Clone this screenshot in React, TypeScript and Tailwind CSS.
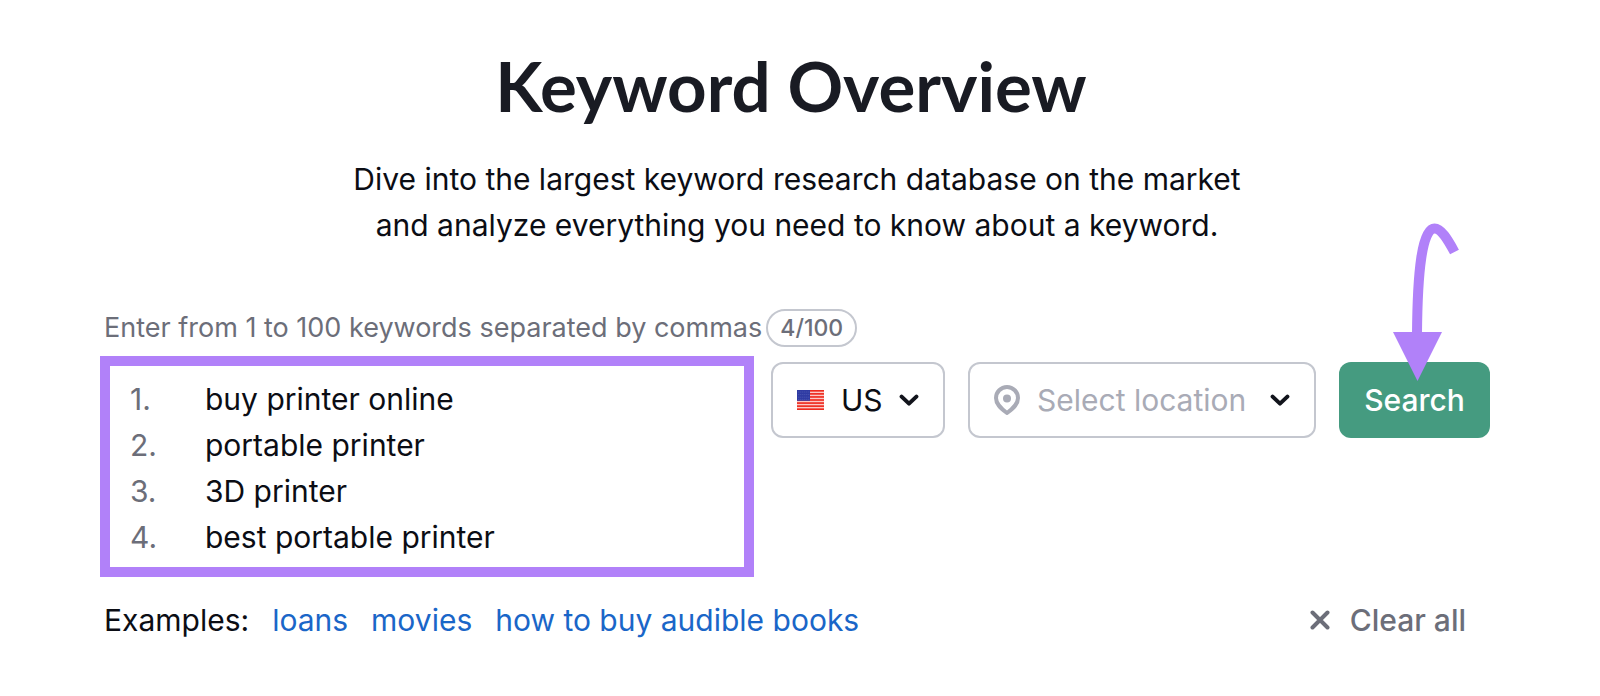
import { useState } from "react";

const PURPLE = "#b181f9";

const examples = ["loans", "movies", "how to buy audible books"];

function Chevron() {
  return (
    <svg
      viewBox="0 0 20 12"
      className="pointer-events-none h-3 w-5 shrink-0"
      fill="none"
      stroke="#12141c"
      strokeWidth="4"
      strokeLinecap="round"
      strokeLinejoin="round"
      aria-hidden="true"
    >
      <path d="M2.6 2.6 10 9.600l7.400-7" />
    </svg>
  );
}

function Flag() {
  return (
    <svg viewBox="0 0 27 20" className="h-5 w-[27px] shrink-0" aria-hidden="true">
      <rect width="27" height="20" fill="#fbc9c6" />
      {[0, 1, 2, 3, 4, 5, 6].map((i) => (
        <rect key={i} y={i * 3.06} width="27" height="1.65" fill="#ee2a1e" />
      ))}
      <rect width="13" height="10.8" fill="#2f3ba3" />
      {[2, 4.6, 7.2, 9.4].map((y) => (
        <path key={y} d={`M1.5 ${y}h11`} stroke="#6f78c4" strokeWidth=".7" strokeDasharray=".7 1.3" />
      ))}
    </svg>
  );
}

function Pin() {
  return (
    <svg viewBox="0 0 26 30" className="h-[30px] w-[26px] shrink-0" aria-hidden="true">
      <path
        d="M13 2C6.9 2 2 6.9 2 13c0 5.800 4 9.700 11 15 7-5.300 11-9.200 11-15C24 6.900 19.100 2 13 2Z"
        fill="none"
        stroke="#a9abb6"
        strokeWidth="4"
        strokeLinejoin="round"
      />
      <circle cx="13" cy="13.500" r="4" fill="#a9abb6" />
    </svg>
  );
}

function Arrow() {
  return (
    <svg
      viewBox="0 0 70 160"
      className="pointer-events-none absolute -top-[140px] left-[54px] h-40 w-[70px]"
      aria-hidden="true"
    >
      <path
        d="M61.500 30C54.500 17 48 6.500 41.500 6.500C29 6.500 24.500 50 24 112"
        fill="none"
        stroke={PURPLE}
        strokeWidth="10"
      />
      <path d="M0 110h49L24.500 159Z" fill={PURPLE} />
    </svg>
  );
}

export default function App() {
  const [text, setText] = useState("buy printer online\nportable printer\n3D printer\nbest portable printer");
  const lines = text.split("\n");
  const count = lines.filter((line) => line.trim()).length;

  return (
    <main className="min-h-screen bg-white pt-11 pr-[110px] pb-10 pl-[104px] font-['Inter',sans-serif] text-[30px] text-[#0b0d14] [font-optical-sizing:none]">
      <header className="text-center">
        <h1 className="pr-3 font-['Lato',sans-serif] text-[69px] leading-[84px] font-bold text-[#191b23]">
          Keyword Overview
        </h1>
        <p className="mt-7 leading-[46px]">
          Dive into the largest keyword research database on the market
          <br />
          and analyze everything you need to know about a keyword.
        </p>
      </header>

      <form onSubmit={(e) => e.preventDefault()}>
        <div className="mt-[61px] flex items-center gap-1">
          <label htmlFor="keywords" className="text-[27px] leading-[38px] text-[#6c6e79]">
            Enter from 1 to 100 keywords separated by commas
          </label>
          <span className="rounded-full border-2 border-[#c4c7cf] px-3 text-[23px] leading-[34px] font-medium text-[#6c6e79]">
            {count}/100
          </span>
        </div>

        <div className="mt-[9px] flex items-start gap-[23px]">
          <div className="-mr-[6px] -ml-1 flex min-w-0 flex-1 border-[10px] border-[#b181f9] px-5 pt-[10px] pb-[7px] leading-[46px]">
            <ol className="w-[75px] shrink-0 text-[#6c6e79]" aria-hidden="true">
              {lines.map((_, i) => (
                <li key={i}>{i + 1}.</li>
              ))}
            </ol>
            <textarea
              id="keywords"
              rows={lines.length}
              value={text}
              onChange={(e) => setText(e.target.value)}
              className="block min-w-0 flex-1 resize-none overflow-hidden bg-transparent outline-none"
            />
          </div>

          <div className="mt-[6px] flex h-[76px] w-[174px] items-center rounded-xl border-2 border-[#c4c7cf] px-6">
            <Flag />
            <select aria-label="Country" className="ml-[17px] min-w-0 flex-1 appearance-none bg-transparent outline-none">
              <option>US</option>
            </select>
            <Chevron />
          </div>

          <div className="mt-[6px] flex h-[76px] w-[348px] items-center rounded-xl border-2 border-[#c4c7cf] px-6">
            <Pin />
            <select
              aria-label="Location"
              className="ml-[17px] min-w-0 flex-1 appearance-none bg-transparent text-[#a9abb6] outline-none"
            >
              <option>Select location</option>
            </select>
            <Chevron />
          </div>

          <div className="relative mt-[6px]">
            <button type="submit" className="h-[76px] w-[151px] rounded-xl bg-[#459b80] font-medium text-white">
              Search
            </button>
            <Arrow />
          </div>
        </div>

        <div className="mt-5 flex items-center justify-between pr-6 leading-[46px]">
          <div className="flex gap-[23px]">
            <span>Examples:</span>
            {examples.map((item) => (
              <a key={item} href="#" className="text-[#1a66c8]">
                {item}
              </a>
            ))}
          </div>
          <button type="button" onClick={() => setText("")} className="flex items-center gap-5 font-medium text-[#6c6e79]">
            <svg viewBox="0 0 20 20" className="size-5" stroke="currentColor" strokeWidth="4" strokeLinecap="round" aria-hidden="true">
              <path d="m2.500 2.500 15 15m0-15-15 15" />
            </svg>
            Clear all
          </button>
        </div>
      </form>
    </main>
  );
}
